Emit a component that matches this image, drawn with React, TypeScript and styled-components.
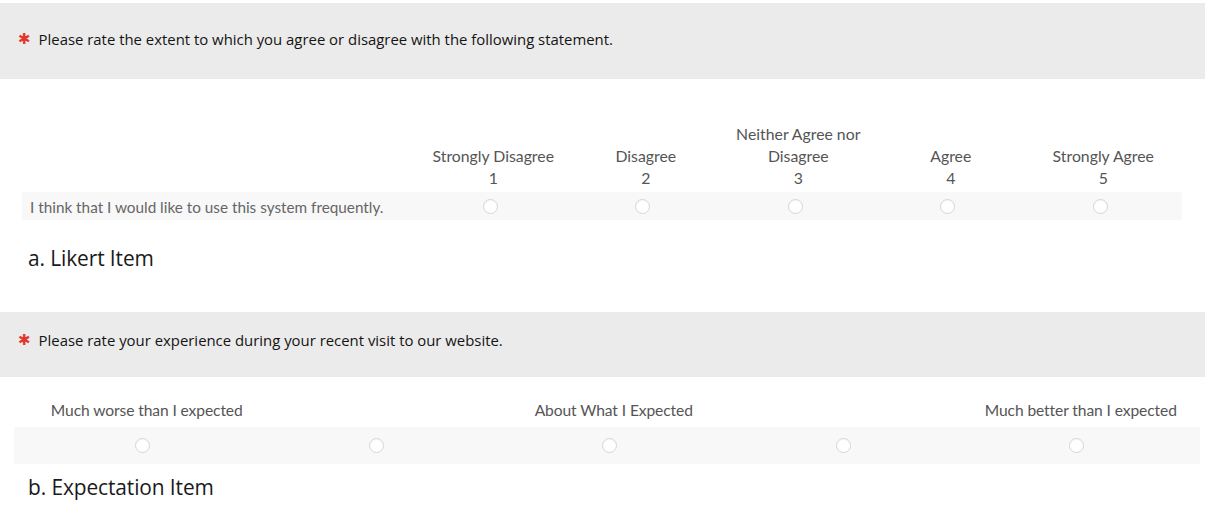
import styled, { createGlobalStyle } from "styled-components"

const GlobalStyle = createGlobalStyle`
    body {
        margin: 0;
        background: #ffffff;
    }
`

const Page = styled.div`
    width: 1208px;
    height: 510px;
    overflow: hidden;
    display: flex;
    flex-direction: column;
    background: #ffffff;
`

const QuestionBar = styled.div<{ height: number, top: number, lift: number }>`
    box-sizing: border-box;
    width: 1205px;
    height: ${props => props.height}px;
    margin-top: ${props => props.top}px;
    display: flex;
    align-items: center;
    gap: 8px;
    padding: 0 0 ${props => props.lift}px 18px;
    background-color: #ebebeb;
    font-family: "Open Sans", "Noto Sans", sans-serif;
    font-size: 14.9px;
    letter-spacing: 0;
    color: #141414;
`

const Asterisk = styled.span`
    color: #e2372c;
    font-family: "DejaVu Sans", sans-serif;
    font-size: 15px;
    font-weight: bold;
    line-height: 1;
`

const LikertHead = styled.div`
    display: grid;
    grid-template-columns: 392px repeat(5, 152.5px) 1fr;
    width: 1160px;
    margin: 44px 0 0 22px;
    align-items: end;
`

const HeadCell = styled.div`
    padding: 0 0 3px 6px;
    text-align: center;
    font-family: Lato, "Open Sans", sans-serif;
    font-size: 15.8px;
    line-height: 22px;
    color: #555555;
    white-space: nowrap;
`

const LikertRow = styled.div`
    display: grid;
    grid-template-columns: 392px repeat(5, 152.5px) 1fr;
    align-items: center;
    width: 1160px;
    height: 28px;
    margin-left: 22px;
    background-color: #f8f8f8;
`

const Statement = styled.div`
    padding: 2px 0 0 8px;
    font-family: Lato, "Open Sans", sans-serif;
    font-size: 15.3px;
    color: #666666;
    white-space: nowrap;
`

const RadioCell = styled.div`
    display: flex;
    justify-content: center;
    align-items: center;
`

const Radio = styled.span`
    box-sizing: border-box;
    width: 15px;
    height: 15px;
    border-radius: 50%;
    border: 1px solid #d6d6d6;
    background: #ffffff;
    box-shadow: inset 0 1px 1px rgba(0, 0, 0, 0.04);
`

const Caption = styled.div<{ top: number }>`
    margin: ${props => props.top}px 0 0 28px;
    font-family: "Open Sans", "Noto Sans", sans-serif;
    font-size: 20.9px;
    line-height: 24px;
    letter-spacing: -0.1px;
    color: #1a1a1a;
`

const ScaleLabels = styled.div`
    display: grid;
    grid-template-columns: repeat(5, 233.5px);
    width: 1167.5px;
    margin: 23px 0 0 30px;
    font-family: Lato, "Open Sans", sans-serif;
    font-size: 15.6px;
    line-height: 20px;
    letter-spacing: -0.1px;
    color: #555555;
`

const ScaleLabel = styled.div<{ col: number }>`
    grid-column: ${props => props.col};
    display: flex;
    justify-content: center;
    white-space: nowrap;
`

const ScaleRow = styled.div`
    box-sizing: border-box;
    display: grid;
    grid-template-columns: repeat(5, 233.5px);
    align-items: center;
    width: 1186px;
    height: 37px;
    margin: 7px 0 0 14px;
    padding-left: 12px;
    background-color: #f8f8f8;
`

const likertOptions = [
    { label: ["Strongly Disagree"], value: 1 },
    { label: ["Disagree"], value: 2 },
    { label: ["Neither Agree nor", "Disagree"], value: 3 },
    { label: ["Agree"], value: 4 },
    { label: ["Strongly Agree"], value: 5 },
]

const scaleLabels = [
    { text: "Much worse than I expected", col: 1 },
    { text: "About What I Expected", col: 3 },
    { text: "Much better than I expected", col: 5 },
]

export default function App() {
    return (
        <Page>
            <GlobalStyle />
            <QuestionBar height={76} top={3} lift={4}>
                <Asterisk>✱</Asterisk>
                <span>Please rate the extent to which you agree or disagree with the following statement.</span>
            </QuestionBar>

            <LikertHead>
                <div />
                {likertOptions.map(option => (
                    <HeadCell key={option.value}>
                        {option.label.map(line => <div key={line}>{line}</div>)}
                        <div>{option.value}</div>
                    </HeadCell>
                ))}
            </LikertHead>
            <LikertRow>
                <Statement>I think that I would like to use this system frequently.</Statement>
                {likertOptions.map(option => (
                    <RadioCell key={option.value}><Radio /></RadioCell>
                ))}
            </LikertRow>
            <Caption top={26}>a. Likert Item</Caption>

            <QuestionBar height={65} top={42} lift={9}>
                <Asterisk>✱</Asterisk>
                <span>Please rate your experience during your recent visit to our website.</span>
            </QuestionBar>

            <ScaleLabels>
                {scaleLabels.map(item => (
                    <ScaleLabel key={item.text} col={item.col}>{item.text}</ScaleLabel>
                ))}
            </ScaleLabels>
            <ScaleRow>
                {[1, 2, 3, 4, 5].map(n => (
                    <RadioCell key={n}><Radio /></RadioCell>
                ))}
            </ScaleRow>
            <Caption top={11}>b. Expectation Item</Caption>
        </Page>
    )
}
